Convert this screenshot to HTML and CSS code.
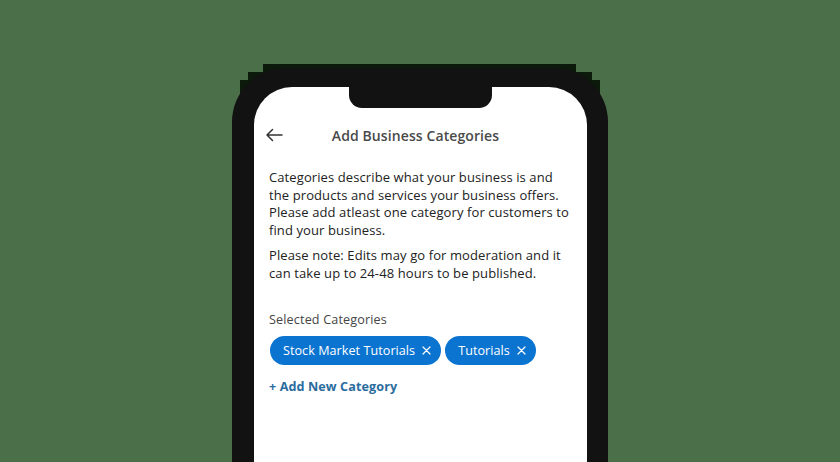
FILE: index.html
```html
<!DOCTYPE html>
<html lang="en">
<head>
<meta charset="utf-8">
<title>Add Business Categories</title>
<link rel="stylesheet" href="styles.css">
</head>
<body>
<div class="stage">
  <div class="phone-wrap">
    <div class="step step-1"></div>
    <div class="step step-2"></div>
    <div class="step step-3"></div>
    <div class="phone">
      <div class="screen">
        <div class="notch"></div>
        <header class="header">
          <svg class="back" width="18" height="14" viewBox="0 0 18 14" aria-hidden="true">
            <path d="M17 7H2M7.5 1.5L2 7l5.5 5.5" fill="none" stroke="#333" stroke-width="1.5" stroke-linecap="round" stroke-linejoin="round"/>
          </svg>
          <h1 class="title">Add Business Categories</h1>
          <span></span>
        </header>
        <main class="content">
          <p class="desc">Categories describe what your business is and the products and services your business offers. Please add atleast one category for customers to find your business.</p>
          <p class="desc note">Please note: Edits may go for moderation and it can take up to 24-48 hours to be published.</p>
          <div class="label">Selected Categories</div>
          <div class="chips">
            <span class="chip">Stock Market Tutorials <svg class="x" width="9" height="9" viewBox="0 0 9 9" aria-hidden="true"><path d="M1 1l7 7M8 1L1 8" stroke="#fff" stroke-width="1.2" stroke-linecap="round"/></svg></span>
            <span class="chip">Tutorials <svg class="x" width="9" height="9" viewBox="0 0 9 9" aria-hidden="true"><path d="M1 1l7 7M8 1L1 8" stroke="#fff" stroke-width="1.2" stroke-linecap="round"/></svg></span>
          </div>
          <a class="add" href="#">+ Add New Category</a>
        </main>
      </div>
    </div>
  </div>
</div>
</body>
</html>
```

FILE: styles.css
```css
* { box-sizing: border-box; }
html, body {
  margin: 0;
  padding: 0;
}
body {
  width: 840px;
  height: 462px;
  overflow: hidden;
  background: #4b7049;
  font-family: "Open Sans", "Liberation Sans", sans-serif;
}
.stage {
  display: flex;
  justify-content: center;
  padding-top: 64px;
}
.phone-wrap {
  position: relative;
  width: 376px;
  height: 398px;
}
.step {
  position: absolute;
  background: #0c1a0b;
  bottom: 0;
}
.step-1 { left: 31px; right: 32px; top: 0; }
.step-2 { left: 16px; right: 16px; top: 8px; }
.step-3 { left: 8px; right: 8px; top: 16px; }
.phone {
  position: relative;
  margin-top: 4px;
  height: 394px;
  background: #121212;
  border-radius: 54px 54px 0 0;
  padding: 19px 21px 0 22px;
}
.screen {
  position: relative;
  height: 100%;
  background: #fff;
  border-radius: 38px 38px 0 0;
  padding: 36px 11px 0 11px;
}
.notch {
  position: absolute;
  top: 0;
  left: 95px;
  width: 143px;
  height: 21px;
  background: #121212;
  border-radius: 0 0 13px 13px;
}
.header {
  display: grid;
  grid-template-columns: 1fr auto 1fr;
  align-items: center;
  height: 24px;
  padding-right: 10px;
}
.back { display: block; }
.title {
  margin: 0;
  font-size: 14px;
  font-weight: 600;
  color: #4a4a4a;
  letter-spacing: 0.1px;
}
.content {
  padding: 22px 0 0 4px;
}
.desc {
  margin: 0;
  font-size: 13px;
  line-height: 17.7px;
  letter-spacing: 0.1px;
  color: #222;
}
.note { margin-top: 7px; }
.label {
  margin-top: 29px;
  font-size: 12.6px;
  line-height: 17px;
  letter-spacing: 0.15px;
  color: #454545;
}
.chips {
  display: flex;
  gap: 4px;
  margin-top: 8px;
  padding-left: 1px;
}
.chip {
  display: inline-flex;
  align-items: center;
  gap: 7px;
  height: 29px;
  padding: 0 10px 0 13px;
  border-radius: 15px;
  background: #0b74d1;
  color: #fff;
  font-size: 12.6px;
  letter-spacing: 0.05px;
}
.x { display: block; }
.add {
  display: block;
  margin-top: 13px;
  font-size: 12.6px;
  line-height: 17px;
  font-weight: 700;
  letter-spacing: 0.1px;
  color: #2b6c9e;
  text-decoration: none;
}
```
